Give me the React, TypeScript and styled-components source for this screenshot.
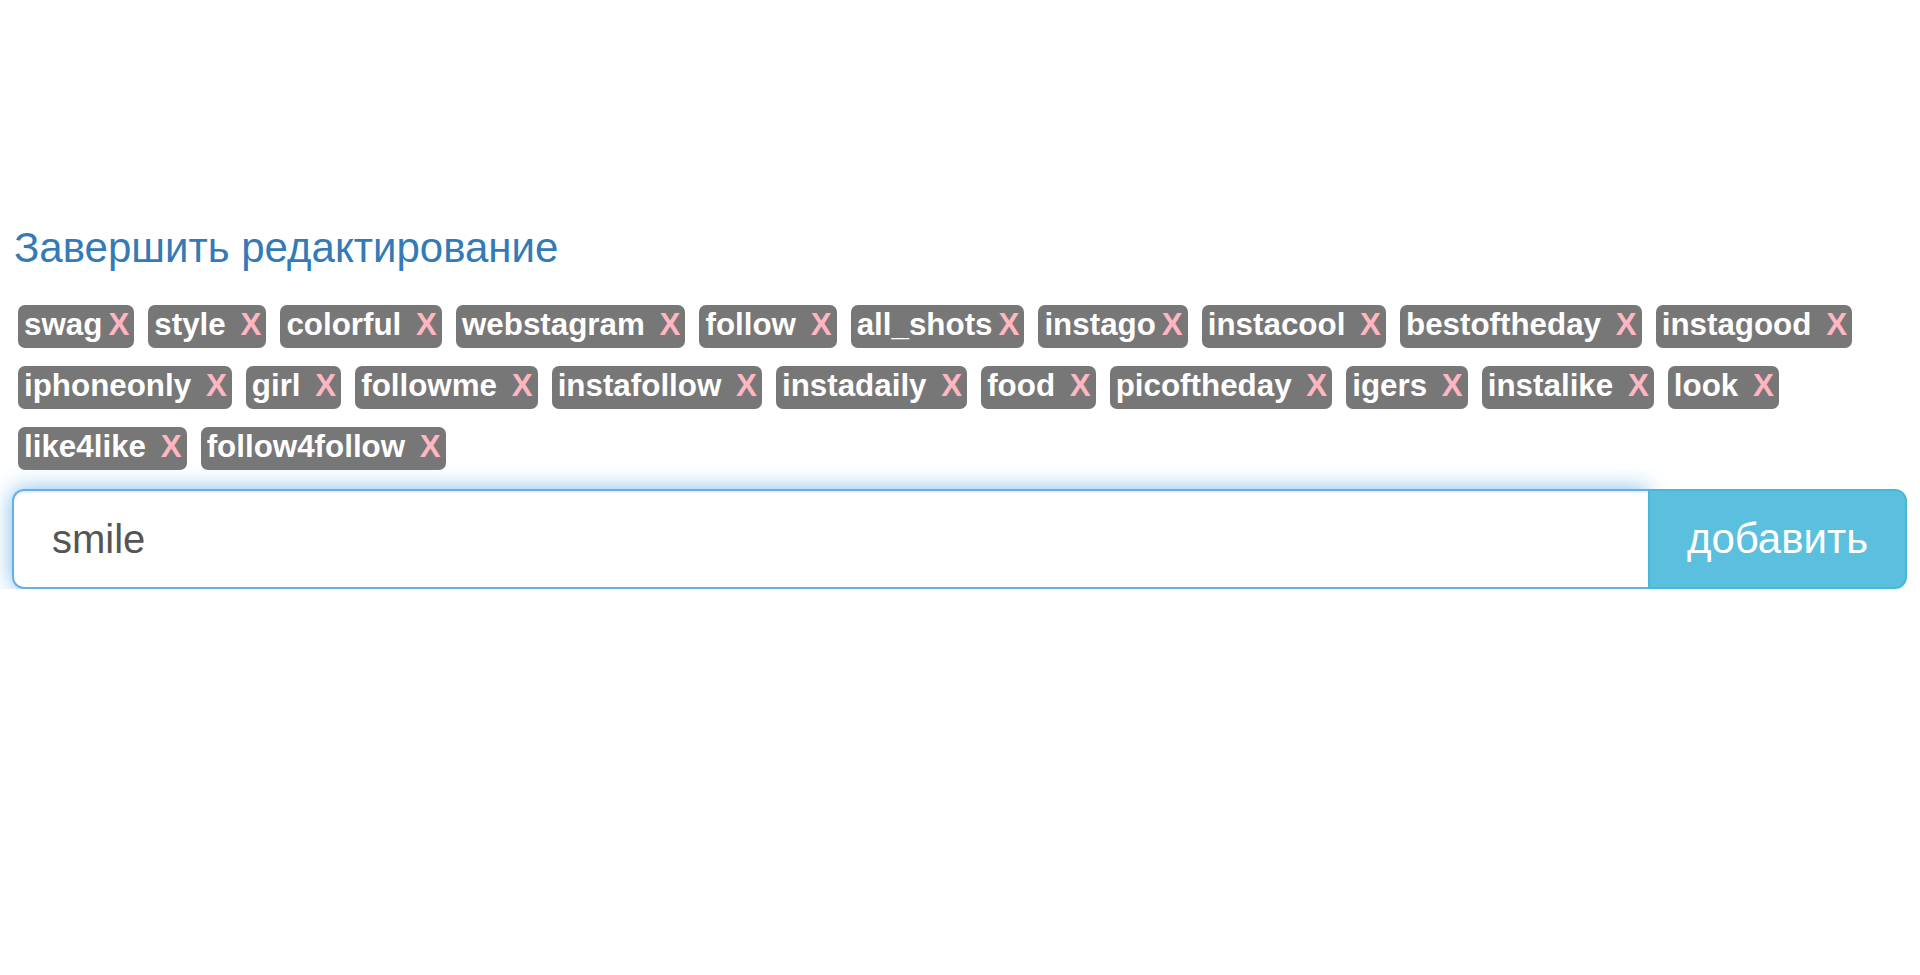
import React from "react";
import styled, { createGlobalStyle } from "styled-components";

const GlobalStyle = createGlobalStyle`
  html, body {
    margin: 0;
    padding: 0;
    background: #ffffff;
    font-family: "Liberation Sans", Arial, Helvetica, sans-serif;
  }
  * { box-sizing: border-box; }
`;

const Page = styled.div`
  padding: 226px 13px 0 12px;
`;

const FinishLink = styled.a`
  display: block;
  font-size: 42px;
  line-height: 43px;
  color: #337ab7;
  text-decoration: none;
  padding-left: 2px;
  margin: 0 0 36px 0;
  cursor: pointer;
`;

const TagList = styled.div`
  display: flex;
  flex-wrap: wrap;
  column-gap: 14px;
  row-gap: 18px;
  padding-left: 6px;
  margin-bottom: 19px;
`;

const Tag = styled.span`
  display: inline-block;
  background: #777777;
  color: #ffffff;
  font-weight: 700;
  font-size: 31.35px;
  line-height: 30px;
  padding: 5px 5px 8px 6px;
  border-radius: 7px;
  white-space: pre;
`;

const Remove = styled.span`
  color: #ffb6c1;
  margin-left: 6px;
  cursor: pointer;
`;

const InputGroup = styled.div`
  display: flex;
  height: 100px;
`;

const TextInput = styled.input`
  flex: 1;
  min-width: 0;
  height: 100%;
  border: 2px solid #66afe9;
  border-right: none;
  border-radius: 12px 0 0 12px;
  padding: 0 20px 0 38px;
  font-family: "Liberation Sans", Arial, sans-serif;
  font-size: 40px;
  color: #555555;
  outline: none;
  box-shadow: inset 0 2px 2px rgba(0, 0, 0, 0.075), 0 0 22px rgba(102, 175, 233, 0.85);
  background: #ffffff;
`;

const AddButton = styled.button`
  width: 259px;
  height: 100%;
  background: #5bc0de;
  border: 2px solid #46b8da;
  border-radius: 0 12px 12px 0;
  color: #ffffff;
  font-family: "Liberation Sans", Arial, sans-serif;
  font-size: 42px;
  padding: 0;
  cursor: pointer;
`;

const tags: { name: string; tight?: boolean }[] = [
  { name: "swag", tight: true },
  { name: "style" },
  { name: "colorful" },
  { name: "webstagram" },
  { name: "follow" },
  { name: "all_shots", tight: true },
  { name: "instago", tight: true },
  { name: "instacool" },
  { name: "bestoftheday" },
  { name: "instagood" },
  { name: "iphoneonly" },
  { name: "girl" },
  { name: "followme" },
  { name: "instafollow" },
  { name: "instadaily" },
  { name: "food" },
  { name: "picoftheday" },
  { name: "igers" },
  { name: "instalike" },
  { name: "look" },
  { name: "like4like" },
  { name: "follow4follow" },
];

export default function App() {
  return (
    <>
      <GlobalStyle />
      <Page>
        <FinishLink>Завершить редактирование</FinishLink>
        <TagList>
          {tags.map((t) => (
            <Tag key={t.name}>
              {t.name}
              {t.tight ? "" : " "}
              <Remove>X</Remove>
            </Tag>
          ))}
        </TagList>
        <InputGroup>
          <TextInput defaultValue="smile" />
          <AddButton>добавить</AddButton>
        </InputGroup>
      </Page>
    </>
  );
}
